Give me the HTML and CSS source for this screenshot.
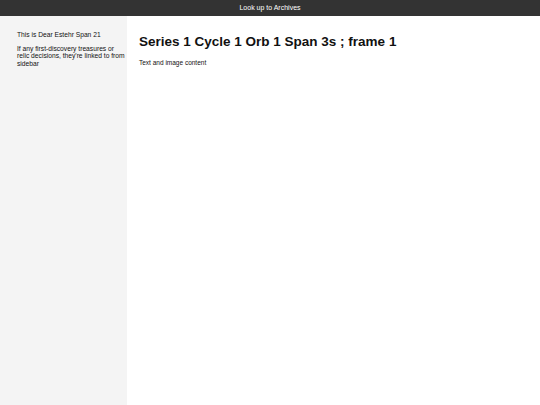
FILE: index.html
```html
<!DOCTYPE html>
<html>
<head>
  <title>Archives</title>
  <link rel="stylesheet" href="styles.css">
</head>
<body>
  <header class="topbar">Look up to Archives</header>
  <div class="layout">
    <aside class="sidebar">
      <p>This is Dear Estehr Span 21</p>
      <p>If any first-discovery treasures or relic decisions, they're linked to from sidebar</p>
    </aside>
    <main class="content">
      <h1>Series 1 Cycle 1 Orb 1 Span 3s ; frame 1</h1>
      <p>Text and image content</p>
    </main>
  </div>
</body>
</html>
```
FILE: styles.css
```css
body {
  margin: 0;
  font-family: 'Liberation Sans', Arial, sans-serif;
  color: #111;
  height: 100vh;
  display: flex;
  flex-direction: column;
}
.topbar {
  background-color: #333;
  color: #fff;
  font-size: 7px;
  height: 16px;
  line-height: 16px;
  text-align: center;
}
.layout {
  flex: 1;
  display: flex;
}
.sidebar {
  box-sizing: border-box;
  width: 127px;
  background-color: #f4f4f4;
  padding: 15px 0 0 17px;
  font-size: 6.7px;
  line-height: 7.5px;
}
.sidebar p {
  margin: 0 0 6px;
}
.content {
  flex: 1;
  padding: 18px 12px;
}
.content h1 {
  font-size: 13.5px;
  line-height: 15px;
  margin: 0 0 10px;
}
.content p {
  font-size: 6.5px;
  margin: 0;
}
```
